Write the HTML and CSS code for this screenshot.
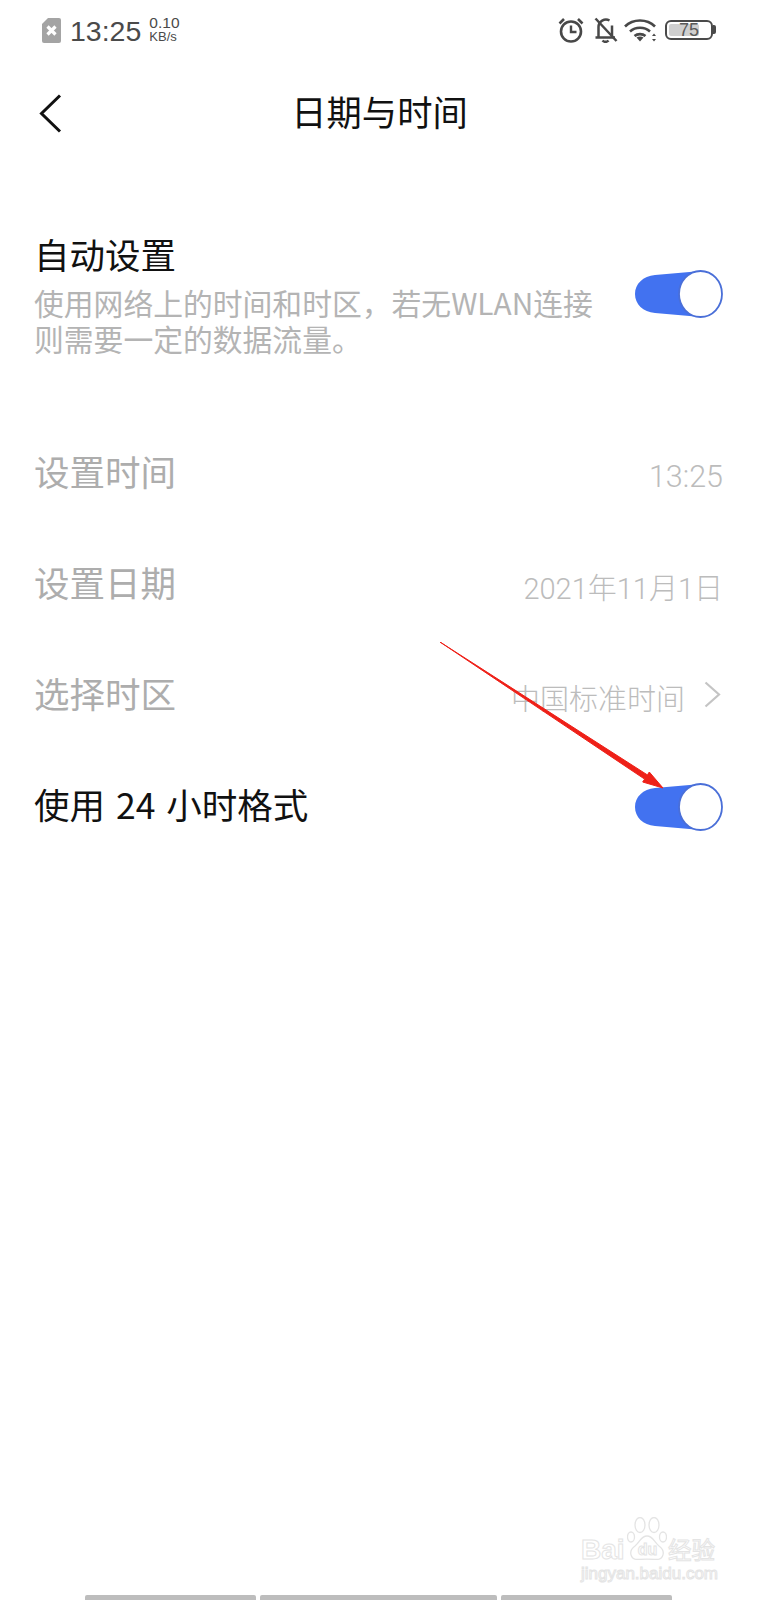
FILE: index.html
```html
<!DOCTYPE html>
<html lang="zh-CN">
<head>
    <meta charset="UTF-8">
    <meta name="viewport" content="width=device-width, initial-scale=1.0">
    <title>日期与时间</title>
    <link rel="stylesheet" href="styles.css">
</head>
<body>
    <div class="page">
        <!-- Status bar -->
        <div class="status-bar">
            <div class="status-left">
                <svg class="sim-icon" width="19" height="25" viewBox="0 0 19 25">
                    <path d="M6 0H17a2 2 0 0 1 2 2V23a2 2 0 0 1-2 2H2a2 2 0 0 1-2-2V6z" fill="#a4a4a4"/>
                    <path d="M5.500 8.500L13.500 16.500M13.500 8.500L5.500 16.500" stroke="#fff" stroke-width="3.200"/>
                </svg>
                <span class="status-time">13:25</span>
                <div class="net-speed">
                    <span class="net-value">0.10</span>
                    <span class="net-unit">KB/s</span>
                </div>
            </div>
            <div class="status-right">
                <svg class="alarm-icon" width="26" height="26" viewBox="0 0 26 26" fill="none" stroke="#484848">
                    <circle cx="13" cy="14.500" r="10" stroke-width="2.600"/>
                    <path d="M13 8.500V15H18.500" stroke-width="2.400"/>
                    <path d="M1.500 6.500L6 2M24.500 6.500L20 2" stroke-width="2.600"/>
                </svg>
                <svg class="bell-icon" width="24" height="26" viewBox="0 0 24 26" fill="none" stroke="#484848" stroke-width="2.500">
                    <path d="M4.500 20V10a7.500 7.500 0 0 1 11-6.500M18 8.500V20M1.500 20.500H21"/>
                    <path d="M8.500 23.500a4 4 0 0 0 6 0"/>
                    <path d="M1.500 1.500L22.500 24"/>
                </svg>
                <svg class="wifi-icon" width="34" height="24" viewBox="0 0 34 24" fill="none" stroke="#484848" stroke-width="2.600">
                    <path d="M1 8.500C9 .5 23 .5 31 8.500"/>
                    <path d="M6 13.500C11.500 8.500 20.500 8.500 26 13.500"/>
                    <path d="M10.500 18C13.500 15.500 18.500 15.500 21.500 18"/>
                    <path d="M12.500 19.500L16 23.500L19.500 19.500C17.500 18 14.500 18 12.500 19.500Z" fill="#484848" stroke="none"/>
                    <path d="M30 15.500L32 18H28ZM30 23.500L32 21H28Z" fill="#484848" stroke="none"/>
                </svg>
                <div class="battery">
                    <div class="battery-body">
                        <div class="battery-level"></div>
                        <span class="battery-text">75</span>
                    </div>
                    <div class="battery-tip"></div>
                </div>
            </div>
        </div>

        <!-- Title bar -->
        <div class="title-bar">
            <svg class="back-icon" width="23" height="39" viewBox="0 0 23 39" fill="none">
                <path d="M21 1.500L2.500 19.500L21 37.500" stroke="#111" stroke-width="3"/>
            </svg>
            <h1 class="title">日期与时间</h1>
        </div>

        <!-- Settings -->
        <div class="auto-row">
            <div class="auto-text">
                <div class="row-label">自动设置</div>
                <div class="row-desc">使用网络上的时间和时区，若无WLAN连接<br>则需要一定的数据流量。</div>
            </div>
            <svg class="toggle toggle-auto" width="88" height="48" viewBox="0 0 88 48">
                <path d="M66 1L20 5C8 6 0 14 0 24C0 34 8 42 20 43L66 47Z" fill="#4272f0"/>
                <ellipse cx="65.500" cy="24" rx="21.500" ry="23" fill="#fff" stroke="#4a6fd8" stroke-width="1.800"/>
            </svg>
        </div>

        <div class="row">
            <span class="row-label row-disabled">设置时间</span>
            <span class="row-value row-time">13:25</span>
        </div>
        <div class="row">
            <span class="row-label row-disabled">设置日期</span>
            <span class="row-value">2021年11月1日</span>
        </div>
        <div class="row">
            <span class="row-label row-disabled">选择时区</span>
            <div class="row-link">
                <span class="row-value">中国标准时间</span>
                <svg class="chevron" width="17" height="27" viewBox="0 0 17 27" fill="none">
                    <path d="M1.500 1.500L15 13.500L1.500 25.500" stroke="#c4c4c4" stroke-width="2.200"/>
                </svg>
            </div>
        </div>
        <div class="row">
            <span class="row-label row-spaced">使用 24 小时格式</span>
            <svg class="toggle toggle-last" width="88" height="48" viewBox="0 0 88 48">
                <path d="M66 1L20 5C8 6 0 14 0 24C0 34 8 42 20 43L66 47Z" fill="#4272f0"/>
                <ellipse cx="65.500" cy="24" rx="21.500" ry="23" fill="#fff" stroke="#4a6fd8" stroke-width="1.800"/>
            </svg>
        </div>

        <!-- Bottom bars of the next screenshot -->
        <div class="bottom-bars">
            <div class="bar bar-a"></div>
            <div class="bar bar-b"></div>
            <div class="bar bar-c"></div>
        </div>

        <!-- Red annotation arrow -->
        <svg class="arrow" width="240" height="160" viewBox="0 0 240 160">
            <path d="M0 0L207.400 132.900L209.300 130L223 146L202.700 140L204.600 137.100Z" fill="#ee2018" stroke="#ee2018" stroke-width="1" stroke-linejoin="round"/>
        </svg>

        <!-- Watermark -->
        <div class="watermark">
            <div class="wm-top">
                <span class="wm-bai">Bai</span>
                <div class="wm-logo">
                    <svg class="wm-paw" width="40" height="43" viewBox="0 0 40 43" fill="none" stroke="#e4e4e4" stroke-width="1.300">
                        <ellipse cx="4" cy="20" rx="3.500" ry="5"/>
                        <ellipse cx="13" cy="8" rx="5" ry="7.500"/>
                        <ellipse cx="27" cy="8" rx="5" ry="7.500"/>
                        <ellipse cx="36" cy="20" rx="3.500" ry="5"/>
                        <path d="M20 19C14 19 13 25 8 29C1 34 3 43 12 42.500C17 42 23 42 28 42.500C37 43 39 34 32 29C27 25 26 19 20 19Z"/>
                    </svg>
                    <span class="wm-du">du</span>
                </div>
                <span class="wm-cn">经验</span>
            </div>
            <div class="wm-url">jingyan.baidu.com</div>
        </div>
    </div>
</body>
</html>
```

FILE: styles.css
```css
* {
    box-sizing: border-box;
}
body {
    margin: 0;
    background-color: #fff;
    color: #111;
    font-family: "Noto Sans CJK SC", "Liberation Sans", sans-serif;
}
.page {
    position: relative;
    width: 757px;
    height: 1600px;
    overflow: hidden;
    display: flex;
    flex-direction: column;
}

/* Status bar */
.status-bar {
    height: 60px;
    padding: 17px 41px 0 42px;
    display: flex;
    justify-content: space-between;
    align-items: flex-start;
    color: #4a4a4a;
    font-family: "Liberation Sans", sans-serif;
}
.status-left {
    display: flex;
    align-items: center;
    height: 27px;
}
.status-time {
    margin-left: 9px;
    padding-top: 2px;
    font-size: 28.500px;
    line-height: 27px;
}
.net-speed {
    margin-left: 8px;
    padding-bottom: 2px;
    display: flex;
    flex-direction: column;
    line-height: 14px;
}
.net-value {
    font-size: 15.500px;
}
.net-unit {
    font-size: 13px;
}
.status-right {
    display: flex;
    align-items: center;
    height: 25px;
}
.bell-icon {
    margin-left: 10px;
}
.wifi-icon {
    margin-left: 6px;
}
.battery {
    margin-left: 7px;
    display: flex;
    align-items: center;
}
.battery-body {
    position: relative;
    width: 48px;
    height: 20px;
    border: 2px solid #4a4a4a;
    border-radius: 6px;
    padding: 2px;
}
.battery-level {
    width: 75%;
    height: 100%;
    background-color: #cfcfcf;
    border-radius: 2px;
}
.battery-text {
    position: absolute;
    top: 0;
    left: 0;
    width: 100%;
    text-align: center;
    font-size: 18px;
    line-height: 16px;
    color: #5a5a5a;
}
.battery-tip {
    width: 3px;
    height: 9px;
    background-color: #4a4a4a;
    border-radius: 0 2px 2px 0;
}

/* Title bar */
.title-bar {
    height: 106px;
    padding-left: 39px;
    display: flex;
    align-items: center;
    position: relative;
}
.title {
    position: absolute;
    left: 0;
    right: 0;
    margin: 0;
    padding: 0 0 5px 2px;
    text-align: center;
    font-size: 35.300px;
    font-weight: 400;
    line-height: 46px;
}

/* Rows */
.row-label {
    padding-bottom: 4px;
    font-size: 35.500px;
    line-height: 46px;
    color: #111;
}
.row-disabled {
    color: #adadad;
}
.row-spaced {
    word-spacing: 3px;
}
.row-desc {
    margin-top: 3px;
    font-size: 29.800px;
    line-height: 36px;
    color: #b4b4b4;
}
.auto-row {
    margin-top: 65px;
    padding: 0 34px 0 34px;
    height: 186px;
    display: flex;
    justify-content: space-between;
    align-items: flex-start;
}
.toggle-auto {
    margin-top: 39px;
}
.toggle-last {
    margin-top: 2px;
}
.row {
    height: 111px;
    padding: 0 34px;
    display: flex;
    justify-content: space-between;
    align-items: center;
}
.row-value {
    padding-top: 4px;
    font-family: "Roboto", "Noto Sans CJK SC", sans-serif;
    font-weight: 300;
    font-size: 29px;
    color: #bcbcbc;
}
.row-time {
    padding-top: 8px;
    font-size: 30.500px;
}
.row-link {
    display: flex;
    align-items: center;
}
.chevron {
    margin-left: 19px;
    margin-right: 2px;
}

/* Bottom bars */
.bottom-bars {
    margin-top: auto;
    padding-left: 85px;
    display: flex;
    gap: 4px;
}
.bar {
    height: 5px;
    background-color: #bdbdbd;
    border-radius: 2px 2px 0 0;
}
.bar-a {
    width: 171px;
}
.bar-b {
    width: 237px;
}
.bar-c {
    width: 171px;
}

/* Overlays */
.arrow {
    position: absolute;
    left: 440px;
    top: 642px;
}
.watermark {
    position: absolute;
    left: 581px;
    top: 1517px;
    width: 140px;
    color: transparent;
    font-family: "Liberation Sans", sans-serif;
    -webkit-text-stroke: 1px #e4e4e4;
}
.wm-top {
    height: 43px;
    display: flex;
    align-items: flex-end;
    font-weight: 700;
}
.wm-bai {
    width: 46px;
    margin-bottom: -2px;
    font-size: 28px;
    line-height: 24px;
}
.wm-logo {
    position: relative;
    width: 41px;
    height: 43px;
    flex-shrink: 0;
}
.wm-paw {
    display: block;
}
.wm-du {
    position: absolute;
    left: 0;
    right: 0;
    top: 24px;
    text-align: center;
    font-size: 16px;
    line-height: 18px;
}
.wm-cn {
    margin-bottom: -1px;
    font-family: "Noto Sans CJK SC", sans-serif;
    font-size: 23.500px;
    line-height: 24px;
    font-weight: 400;
    white-space: nowrap;
}
.wm-url {
    margin-top: 3px;
    font-size: 17px;
    line-height: 22px;
    white-space: nowrap;
}
```
